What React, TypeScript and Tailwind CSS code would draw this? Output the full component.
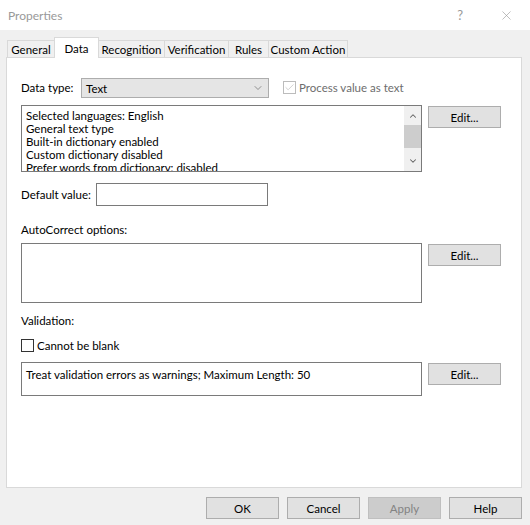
import { ChevronDown, ChevronUp, X, Check } from 'lucide-react'

const TABS = [
  { label: 'General', w: 'w-[47px]' },
  { label: 'Data', w: 'w-[45px]', active: true },
  { label: 'Recognition', w: 'w-[65px]' },
  { label: 'Verification', w: 'w-[64px]' },
  { label: 'Rules', w: 'w-[40px]' },
  { label: 'Custom Action', w: 'w-[80px]' },
]

const LANG_LINES = [
  'Selected languages: English',
  'General text type',
  'Built-in dictionary enabled',
  'Custom dictionary disabled',
  'Prefer words from dictionary: disabled',
]

function WinButton({ children, disabled }: { children: React.ReactNode; disabled?: boolean }) {
  return (
    <div
      className={`w-[73px] h-[22px] flex items-center justify-center border ${
        disabled ? 'bg-[#cccccc] border-[#bfbfbf] text-[#838383]' : 'bg-[#e1e1e1] border-[#adadad] text-black'
      }`}
    >
      {children}
    </div>
  )
}

export default function App() {
  return (
    <div
      className="w-[530px] h-[525px] bg-[#f0f0f0] flex flex-col text-[11.5px] leading-[13px] text-black whitespace-nowrap"
      style={{ fontFamily: 'Lato, "Liberation Sans", sans-serif' }}
    >
      {/* title bar */}
      <div className="h-[30px] bg-white flex items-center pl-[8px]">
        <span className="text-[#999999] text-[12px]">Properties</span>
        <span className="ml-auto text-[#999999] text-[13px] mr-[36px]">?</span>
        <X className="w-[15px] h-[15px] text-[#999999] mr-[16px]" strokeWidth={1} />
      </div>

      {/* tabs */}
      <div className="flex items-end h-[20px] mt-[7px] pl-[7px]">
        {TABS.map((t, i) =>
          t.active ? (
            <div
              key={t.label}
              className={`${t.w} h-[21px] -mb-px bg-white border border-b-0 border-[#d9d9d9] flex justify-center pt-[4px] relative z-10`}
            >
              {t.label}
            </div>
          ) : (
            <div
              key={t.label}
              className={`${t.w} h-[17px] bg-[#f0f0f0] border-t border-[#d9d9d9] ${i === TABS.length - 1 ? 'border-r' : ''} ${
                i === 0 || TABS[i - 1].active ? '' : 'border-l'
              } ${i === 0 ? 'border-l' : ''} flex items-center justify-center`}
            >
              {t.label}
            </div>
          ),
        )}
      </div>

      {/* panel */}
      <div className="ml-[6px] w-[516px] h-[431px] bg-white border border-[#d9d9d9] pl-[14px] pt-[19px]">
        {/* data type */}
        <div className="flex items-center h-[21px]">
          <span className="w-[60px]">Data type:</span>
          <div className="w-[188px] h-[20px] bg-[#e5e5e5] border border-[#adadad] flex items-center pl-[4px] pr-[4px]">
            <span className="pt-[1px]">Text</span>
            <ChevronDown className="ml-auto w-[12px] h-[12px] text-[#555]" strokeWidth={1.2} />
          </div>
          <div className="ml-[14px] w-[13px] h-[13px] border border-[#bcbcbc] flex items-center justify-center">
            <Check className="w-[11px] h-[11px] text-[#bcbcbc]" strokeWidth={1.5} />
          </div>
          <span className="ml-[3px] text-[#6d6d6d]">Process value as text</span>
        </div>

        {/* languages */}
        <div className="flex mt-[7px]">
          <div className="w-[401px] h-[67px] border border-[#7a7a7a] flex overflow-hidden">
            <div className="flex-1 pl-[4px] pt-[3px] overflow-hidden">
              {LANG_LINES.map((l) => (
                <div key={l} className="h-[13px]">
                  {l}
                </div>
              ))}
            </div>
            <div className="w-[17px] bg-[#f0f0f0] flex flex-col items-center">
              <ChevronUp className="w-[10px] h-[10px] mt-[5px] text-[#606060]" strokeWidth={2.5} />
              <div className="w-[17px] h-[23px] bg-[#cdcdcd] mt-[4px]" />
              <ChevronDown className="w-[10px] h-[10px] mt-auto mb-[5px] text-[#606060]" strokeWidth={2.5} />
            </div>
          </div>
          <div className="ml-[6px] mt-[1px]">
            <WinButton>Edit...</WinButton>
          </div>
        </div>

        {/* default value */}
        <div className="flex items-center mt-[11px]">
          <span className="w-[75px]">Default value:</span>
          <div className="w-[172px] h-[23px] border border-[#7a7a7a]" />
        </div>

        {/* autocorrect */}
        <div className="mt-[17px]">AutoCorrect options:</div>
        <div className="flex mt-[7px]">
          <div className="w-[401px] h-[60px] border border-[#7a7a7a]" />
          <div className="ml-[6px] mt-[1px]">
            <WinButton>Edit...</WinButton>
          </div>
        </div>

        {/* validation */}
        <div className="mt-[11px]">Validation:</div>
        <div className="flex items-center mt-[12px]">
          <div className="w-[13px] h-[13px] border border-[#333333]" />
          <span className="ml-[3px]">Cannot be blank</span>
        </div>
        <div className="flex mt-[10px]">
          <div className="w-[401px] h-[34px] border border-[#7a7a7a] pl-[4px] pt-[5px]">
            Treat validation errors as warnings; Maximum Length: 50
          </div>
          <div className="ml-[6px] mt-[1px]">
            <WinButton>Edit...</WinButton>
          </div>
        </div>
      </div>

      {/* footer buttons */}
      <div className="flex justify-end gap-[8px] pr-[8px] mt-[9px]">
        <WinButton>OK</WinButton>
        <WinButton>Cancel</WinButton>
        <WinButton disabled>Apply</WinButton>
        <WinButton>Help</WinButton>
      </div>
    </div>
  )
}
